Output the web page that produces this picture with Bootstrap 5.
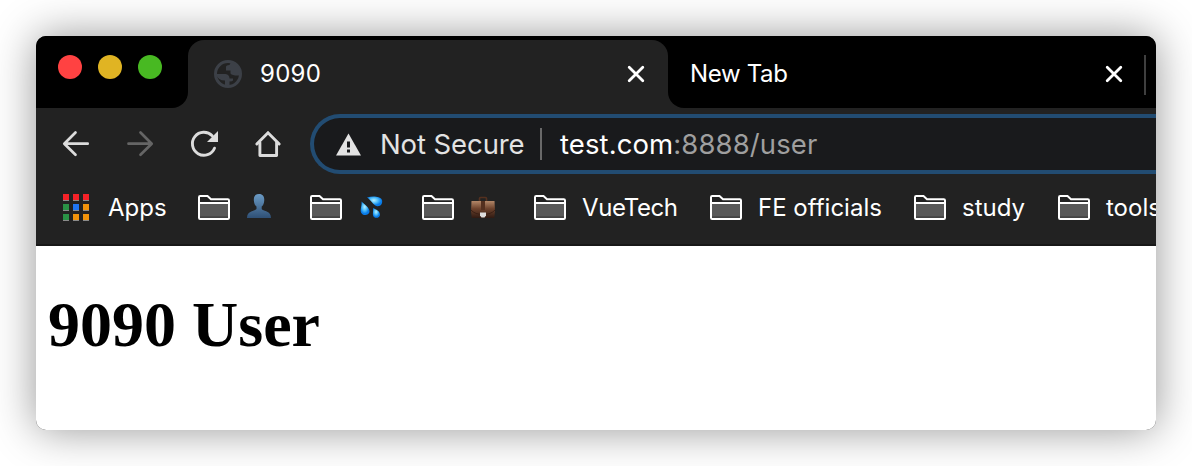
<!DOCTYPE html>
<html lang="en">
<head>
<meta charset="utf-8">
<title>9090</title>
<link href="https://cdn.jsdelivr.net/npm/bootstrap@5.3.0/dist/css/bootstrap.min.css" rel="stylesheet">
<style>
body { background: #fff; padding: 36px; height: 466px; overflow: hidden; font-family: Inter, "Liberation Sans", sans-serif; font-size: 24px; line-height: 32px; }
svg { display: block; flex: none; }
.win { width: 1120px; height: 394px; border-radius: 10px; background: #222; box-shadow: 0 0 44px rgba(0,0,0,.42); }
.strip { height: 72px; color: #fff; }
.lights { width: 152px; background: #000; border-bottom-right-radius: 16px; padding: 19px 0 0 22px; gap: 16px; }
.light { width: 24px; height: 24px; border-radius: 50%; }
.light-red { background: #ff4242; } .light-yellow { background: #e0b423; } .light-green { background: #48b922; }
.tab-wrap { width: 480px; background: #000; padding-top: 4px; }
.tab-on { height: 68px; background: #222; border-radius: 16px 16px 0 0; padding: 0 23px 0 26px; }
.tab-name { margin-left: 18px; letter-spacing: .3px; }
.tab-off { width: 488px; background: #000; border-bottom-left-radius: 16px; padding: 4px 10px 0 22px; }
.tab-new { letter-spacing: -.35px; }
.tab-sep { width: 2px; height: 40px; background: #3f3f3f; margin: 2px 0 0 21px; }
.tools { height: 72px; padding-left: 24px; }
.navs { gap: 32px; width: 250px; }
.omni { height: 60px; border: 4px solid #224c72; border-right: 0; border-radius: 30px 0 0 30px; background: #191a1c; font-size: 27.5px; color: #e3e3e3; padding-left: 22px; }
.secure { width: 160px; margin-left: 19px; letter-spacing: -.1px; }
.omni-sep { width: 2px; height: 32px; background: #696969; margin-right: 18px; }
.host, .path { letter-spacing: .1px; }
.path { color: #9f9f9f; }
.marks { height: 66px; border-bottom: 2px solid #181818; padding: 0 0 8px 27px; color: #fff; }
.mark-item { flex: none; margin-right: 32px; }
.apps-icon { margin: -2px 18px 0 0; }
.w-apps { width: 58px; } .w-emoji { width: 32px; } .w-vue { width: 96px; letter-spacing: -.4px; } .w-fe { width: 124px; } .w-study { width: 64px; }
.view { background: #fff; height: 184px; padding: 44px 12px 0; }
.view h1 { font: bold 64px/70px "Liberation Serif", serif; color: #000; margin: 0; }
</style>
</head>
<body>
<svg width="0" height="0" class="position-absolute">
  <symbol id="folder" viewBox="0 0 32 26">
    <path d="M1 9h30v13H1z" fill="#595959"/><path d="M1 21.2h30v2H1z" fill="#444"/>
    <path d="M1 2.2Q1 1 2.200 1H9.500L13 4.200H29.800Q31 4.200 31 5.400V22.800Q31 24 29.800 24H2.200Q1 24 1 22.800zM1 8h30" fill="none" stroke="#fff" stroke-width="2"/>
  </symbol>
  <symbol id="close" viewBox="0 0 18 18"><path d="M2.200 2.200 15.800 15.800M15.800 2.200 2.200 15.800" stroke="#fff" stroke-width="2.800" stroke-linecap="round"/></symbol>
</svg>
<div class="win overflow-hidden">
  <div class="strip d-flex">
    <div class="lights d-flex">
      <span class="light light-red"></span><span class="light light-yellow"></span><span class="light light-green"></span>
    </div>
    <div class="tab-wrap">
      <div class="tab-on d-flex align-items-center">
        <svg width="28" height="28" viewBox="0 0 28 28"><circle cx="14" cy="14" r="12.500" fill="none" stroke="#3c4047" stroke-width="3"/><path d="M2 14.500 3 14H11.500Q15.500 14.500 15.500 18.500H19V20.500Q18.500 21.500 15.500 21.500V25L12 26Q10.500 25 11 23.500V20.500Q4 20.500 2 14.500zM17 2 15.500 5Q11.500 5 12 7.500V10.500H16.500V13.500Q18.500 16 26 15.500L27 10 23 4z" fill="#3c4047"/></svg>
        <span class="tab-name flex-grow-1">9090</span>
        <svg width="18" height="18"><use href="#close"/></svg>
      </div>
    </div>
    <div class="tab-off d-flex align-items-center">
      <span class="tab-new flex-grow-1">New Tab</span>
      <svg width="18" height="18"><use href="#close"/></svg>
      <span class="tab-sep"></span>
    </div>
  </div>
  <div class="tools d-flex align-items-center">
    <div class="navs d-flex flex-shrink-0">
      <svg width="32" height="32" fill="none" stroke="#dcdcdc" stroke-width="2.700" stroke-linecap="round" stroke-linejoin="round"><path d="M27.700 15.700H4.500M15.500 4.500 4.300 15.700 15.500 26.800"/></svg>
      <svg width="32" height="32" fill="none" stroke="#656565" stroke-width="2.700" stroke-linecap="round" stroke-linejoin="round"><path d="M4.500 15.700H27.500M16.500 4.500 27.700 15.700 16.500 26.800"/></svg>
      <svg width="32" height="32"><path d="M26.500 20.200A11.500 11.500 0 1 1 24.200 7.800" fill="none" stroke="#dcdcdc" stroke-width="2.900" stroke-linecap="round"/><path d="M30 3V14H19z" fill="#dcdcdc"/></svg>
      <svg width="32" height="32" fill="none" stroke="#dcdcdc" stroke-width="2.900" stroke-linecap="round"><path d="M4.800 16 16 4.800 27.200 16" stroke-linejoin="miter"/><path d="M7.900 14.500V27.500H24.600V14.500" stroke-linejoin="round"/></svg>
    </div>
    <div class="omni d-flex align-items-center flex-grow-1">
      <svg width="25" height="23" viewBox="0 0 25 23"><path d="M12.500.5 25 22.500H0z" fill="#e3e3e3"/><path d="M11 8.500h3v6h-3zM11 16.500h3v3h-3z" fill="#191a1c"/></svg>
      <span class="secure text-nowrap">Not Secure</span>
      <span class="omni-sep"></span>
      <span class="text-white host">test.com</span><span class="path">:8888/user</span>
    </div>
  </div>
  <div class="marks d-flex align-items-center text-nowrap">
    <div class="mark-item d-flex align-items-center">
      <svg class="apps-icon" width="27" height="27"><path d="M0 6h6v1H0zM10 6h6v1h-6zM20 6h6v1h-6zM0 16h6v1H0zM10 16h6v1h-6zM20 16h6v1h-6zM0 26h6v1H0zM10 26h6v1h-6zM20 26h6v1h-6z" fill="#8a8a8a"/><path d="M0 0h6v6H0zM10 0h6v6h-6zM20 0h6v6h-6z" fill="#f52228"/><path d="M0 10h6v6H0zM0 20h6v6H0z" fill="#2a9246"/><path d="M10 10h6v6h-6z" fill="#1f76f5"/><path d="M20 10h6v6h-6zM10 20h6v6h-6zM20 20h6v6h-6z" fill="#f1930b"/></svg>
      <span class="w-apps">Apps</span>
    </div>
    <div class="mark-item d-flex align-items-center gap-3">
      <svg width="32" height="26"><use href="#folder"/></svg>
      <svg class="w-emoji" width="32" height="28" viewBox="0 1 32 28"><defs><linearGradient id="bust" x2="0" y2="1"><stop stop-color="#6b9bc5"/><stop offset="1" stop-color="#2f5076"/></linearGradient></defs><path d="M13 1C8.700 1 7.500 4.300 7.900 8c.3 3 1.300 4.500 2.600 5.500v2.500C9 18 2.500 18 1.300 22.500L1 25H25L24.600 22.500C23.500 18 17 18 15.700 16v-2.500c1.300-1 2.200-2.500 2.500-5.500C18.600 4.300 17.300 1 13 1z" fill="url(#bust)"/></svg>
    </div>
    <div class="mark-item d-flex align-items-center gap-3">
      <svg width="32" height="26"><use href="#folder"/></svg>
      <svg class="w-emoji" width="32" height="28" viewBox="0 1 32 28"><defs><radialGradient id="drop" cx=".45" cy=".4"><stop stop-color="#b9efff"/><stop offset=".55" stop-color="#4dbdfa"/><stop offset="1" stop-color="#087be8"/></radialGradient></defs><g fill="url(#drop)"><path d="M9 4.500C14 3 22 3 24 7c1 4-2 7-5.500 6C15 12 13 7 9 4.500z"/><path d="M3.500 8.500C7 12 12 15 11.500 19c-1 4-7 4-8.500.5C2 16 4 13 3.500 8.500z"/><path d="M15 15c3 1.500 7 3 7 6.500 0 4-6 4.500-7 1C14.500 20 15.500 18 15 15z"/></g></svg>
    </div>
    <div class="mark-item d-flex align-items-center gap-3">
      <svg width="32" height="26"><use href="#folder"/></svg>
      <svg class="w-emoji" width="32" height="28" viewBox="0 1 32 28"><defs><linearGradient id="bag" x2="0" y2="1"><stop stop-color="#b38768"/><stop offset=".45" stop-color="#6e432d"/><stop offset="1" stop-color="#301a12"/></linearGradient></defs><path d="M9.500 8V5.500Q9.500 4.500 10.500 4.500H15.500Q16.500 4.500 16.500 5.500V8" fill="none" stroke="#54301f" stroke-width="1.600"/><path d="M1.500 8H24.500L25 18 24.300 25H1.700L1 18z" fill="url(#bag)"/><path d="M1 17Q5 21.500 13 21.500T25 17" fill="none" stroke="#3b2015"/><path d="M11 8h4v9h-4z" fill="#54301f"/><path d="M10 19.500h6v3l-1.500 2h-3l-1.500-2z" fill="#dedede"/></svg>
    </div>
    <div class="mark-item d-flex align-items-center gap-3"><svg width="32" height="26"><use href="#folder"/></svg><span class="w-vue">VueTech</span></div>
    <div class="mark-item d-flex align-items-center gap-3"><svg width="32" height="26"><use href="#folder"/></svg><span class="w-fe">FE officials</span></div>
    <div class="mark-item d-flex align-items-center gap-3"><svg width="32" height="26"><use href="#folder"/></svg><span class="w-study">study</span></div>
    <div class="mark-item d-flex align-items-center gap-3"><svg width="32" height="26"><use href="#folder"/></svg><span>tools</span></div>
  </div>
  <div class="view"><h1>9090 User</h1></div>
</div>
<script src="https://cdn.jsdelivr.net/npm/bootstrap@5.3.0/dist/js/bootstrap.bundle.min.js"></script>
</body>
</html>
